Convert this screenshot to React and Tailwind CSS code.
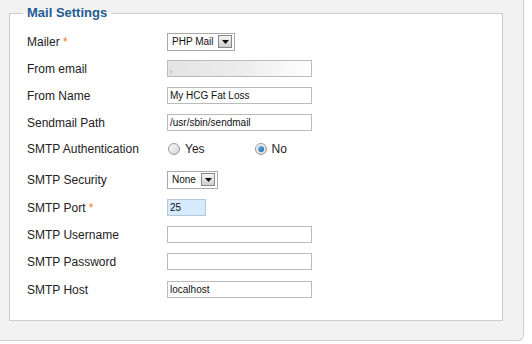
import React from 'react'

// Mail settings form - a Joomla-style global configuration fieldset
const Label = ({ children, required }) => (
  <div className="w-[140px] shrink-0 text-[12px] text-[#222]">
    {children}
    {required && <span className="text-[#f07a1c]"> *</span>}
  </div>
)

const TextInput = ({ value, className = '' }) => (
  <div className={`h-[17px] border border-[#bbb] bg-white px-[2px] text-[10px] leading-[15px] text-[#111] ${className}`}>
    {value}
  </div>
)

const Select = ({ value, width }) => (
  <div className={`flex h-[18px] items-center border border-[#aaa] bg-white pl-[4px] pr-[2px] text-[10px] text-[#111] ${width}`}>
    <span className="flex-1 whitespace-nowrap">{value}</span>
    <span className="flex h-[13px] w-[14px] shrink-0 items-center justify-center border border-[#888] bg-gradient-to-b from-[#f4f4f4] to-[#cfcfcf]">
      <svg width="7" height="4" viewBox="0 0 7 4"><path d="M0 0h7L3.5 4z" fill="#111" /></svg>
    </span>
  </div>
)

const Radio = ({ checked, label }) => (
  <div className="flex items-center gap-[5px]">
    <span className="flex h-[12px] w-[12px] items-center justify-center rounded-full border border-[#9a9a9a] bg-gradient-to-br from-[#fafafa] to-[#d4d4d4]">
      {checked && <span className="h-[6px] w-[6px] rounded-full bg-gradient-to-br from-[#6fc0f0] to-[#1a5d99]" />}
    </span>
    <span className="text-[12px] text-[#222]">{label}</span>
  </div>
)

const Row = ({ className = '', children }) => (
  <div className={`flex h-[27px] items-center ${className}`}>{children}</div>
)

export default function App() {
  return (
    <div className="h-[344px] w-[532px] bg-white" style={{ fontFamily: '"Liberation Sans", Arial, sans-serif' }}>
      <div className="h-[341px] w-[524px] rounded-br-[6px] border-b border-r border-[#cfcfcf] bg-[#f2f2f2] pl-[9px] pt-[5px]">
        <fieldset className="h-[316px] w-[494px] border border-[#cccccc] bg-white">
          <legend className="ml-[13px] px-[4px] text-[13px] font-bold leading-[16px] text-[#1f5c94]">Mail Settings</legend>
          <div className="flex flex-col pl-[17px] pt-[7px]">
            <Row>
              <Label required>Mailer</Label>
              <Select value="PHP Mail" width="w-[68px]" />
            </Row>
            <Row>
              <Label>From email</Label>
              <TextInput
                className="w-[145px] bg-gradient-to-r from-[#e4e4e4] via-[#ececec] to-white text-[#999]"
                value="‚"
              />
            </Row>
            <Row>
              <Label>From Name</Label>
              <TextInput className="w-[145px]" value="My HCG Fat Loss" />
            </Row>
            <Row>
              <Label>Sendmail Path</Label>
              <TextInput className="w-[145px] overflow-hidden whitespace-nowrap" value="/usr/sbin/sendmail" />
            </Row>
            <Row className="-mt-[1px]">
              <Label>SMTP Authentication</Label>
              <div className="flex gap-[50px] pl-[1px]">
                <Radio label="Yes" />
                <Radio checked label="No" />
              </div>
            </Row>
            <Row className="mt-[4px]">
              <Label>SMTP Security</Label>
              <Select value="None" width="w-[51px]" />
            </Row>
            <Row className="mt-[1px]">
              <Label required>SMTP Port</Label>
              <TextInput className="w-[39px] !border-[#b4c8dc] !bg-[#d6ebfd]" value="25" />
            </Row>
            <Row>
              <Label>SMTP Username</Label>
              <TextInput className="w-[145px]" value="" />
            </Row>
            <Row>
              <Label>SMTP Password</Label>
              <TextInput className="w-[145px]" value="" />
            </Row>
            <Row className="mt-[1px]">
              <Label>SMTP Host</Label>
              <TextInput className="w-[145px]" value="localhost" />
            </Row>
          </div>
        </fieldset>
      </div>
    </div>
  )
}
